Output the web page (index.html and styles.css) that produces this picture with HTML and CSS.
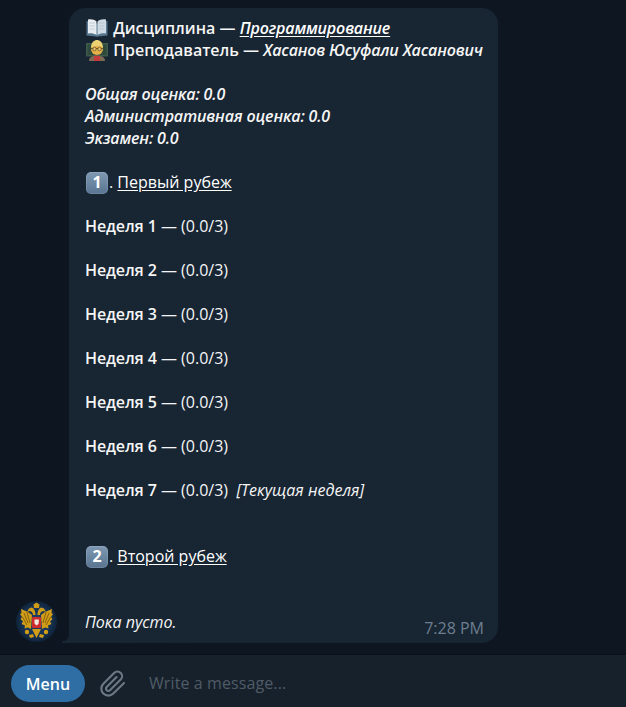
FILE: index.html
```html
<!DOCTYPE html>
<html lang="ru">
<head>
<meta charset="utf-8">
<title>Дисциплина</title>
<link rel="stylesheet" href="styles.css">
</head>
<body>
<main class="chat">
  <div class="row">
    <div class="avatar">
      <svg viewBox="0 0 41 41" width="41" height="41">
        <defs><radialGradient id="sky"><stop offset="0" stop-color="#1c4470"/><stop offset=".75" stop-color="#14304f"/><stop offset="1" stop-color="#0f2238"/></radialGradient></defs>
        <circle cx="20.500" cy="20.500" r="20.500" fill="url(#sky)"/>
        <g fill="#d19c18">
          <path d="M16 14 L12 11 L5 8 L5.500 12 L4 13 L6 16 L4.500 18 L7 20.500 L5.500 23 L9 24.500 L8.500 27.500 L12 26.500 L15 28 Z"/>
          <path d="M25 14 L29 11 L36 8 L35.500 12 L37 13 L35 16 L36.500 18 L34 20.500 L35.500 23 L32 24.500 L32.500 27.500 L29 26.500 L26 28 Z"/>
          <path d="M17 14 C17 11 15 10 13.500 10 L11 11 L13 7.500 L15.500 6.500 C18 7 19.500 10 19.500 14 Z"/>
          <path d="M24 14 C24 11 26 10 27.500 10 L30 11 L28 7.500 L25.500 6.500 C23 7 21.500 10 21.500 14 Z"/>
          <path d="M17.500 3.500 L20.500 1.500 L23.500 3.500 L23 7 L18 7 Z"/>
          <path d="M16 28 L20.500 37 L25 28 Z"/>
          <circle cx="11" cy="31" r="2.200"/>
          <circle cx="30" cy="31" r="2.200"/>
          <path d="M13 34 L17 33 L18 36 L14 37 Z M28 34 L24 33 L23 36 L27 37 Z"/>
        </g>
        <path d="M8 12 L12 22 M6.500 16 L11 24 M11 11 L14 22 M33 12 L29 22 M34.500 16 L30 24 M30 11 L27 22" stroke="#7f5c0e" stroke-width=".9" fill="none"/>
        <rect x="16" y="16" width="9" height="11" rx="1" fill="#cf2a2e"/>
        <path d="M18.500 18.500 L23 18.500 L22.500 23 L20.500 24.500 L18.500 22.500 Z" fill="#efe9df"/>
      </svg>
    </div>
    <article class="bubble">
      <p class="line medium"><svg class="emoji" viewBox="0 0 22 22"><path d="M0.500 4 L10 6 L11 7 L12 6 L21.500 4 L21.500 18.500 L12 19.500 L11 20 L10 19.500 L0.500 18.500 Z" fill="#56778f"/><path d="M2 2.500 C5 1.800 8.500 2.500 10.500 4.500 L10.500 18 C8.500 16.500 5 16 2 16.500 Z" fill="#e8edf1"/><path d="M20 2.500 C17 1.800 13.500 2.500 11.500 4.500 L11.500 18 C13.500 16.500 17 16 20 16.500 Z" fill="#cfdbe4"/><path d="M3.500 6 H9 M3.500 9 H9 M3.500 12 H9 M13 6 H18.500 M13 9 H18.500 M13 12 H18.500" stroke="#a9bac7" stroke-width=".6"/></svg> Дисциплина — <em class="link">Программирование</em></p>
      <p class="line medium"><svg class="emoji" viewBox="0 0 22 22"><rect x="0" y="4" width="22" height="13.500" fill="#3d5a4b"/><rect x="1.500" y="5.500" width="19" height="10.500" fill="#2f4a3d"/><path d="M3 22 C3 18 6.500 16.500 11 16.500 C15.500 16.500 19 18 19 22 Z" fill="#7d6a52"/><rect x="8" y="17" width="6" height="5" fill="#c53a3a"/><circle cx="11" cy="10" r="6" fill="#e3b04a"/><path d="M5 9 C5 3 8.500 1 11 1 C13.500 1 17 3 17 9 C14 6 8 6 5 9 Z" fill="#ecd274"/><path d="M5 9.500 H17" stroke="#5b4420" stroke-width=".8"/><circle cx="8.500" cy="10" r="1.700" fill="#f1cc78" stroke="#5b4420" stroke-width=".7"/><circle cx="13.500" cy="10" r="1.700" fill="#f1cc78" stroke="#5b4420" stroke-width=".7"/></svg> Преподаватель — <em>Хасанов Юсуфали Хасанович</em></p>

      <div class="gap">
        <p class="line"><em>Общая оценка: 0.0</em></p>
        <p class="line"><em>Административная оценка: 0.0</em></p>
        <p class="line"><em>Экзамен: 0.0</em></p>
      </div>

      <p class="line gap"><span class="keycap">1</span>. <a class="link">Первый рубеж</a></p>

      <p class="line gap"><strong>Неделя 1</strong> — (0.0/3)</p>
      <p class="line gap"><strong>Неделя 2</strong> — (0.0/3)</p>
      <p class="line gap"><strong>Неделя 3</strong> — (0.0/3)</p>
      <p class="line gap"><strong>Неделя 4</strong> — (0.0/3)</p>
      <p class="line gap"><strong>Неделя 5</strong> — (0.0/3)</p>
      <p class="line gap"><strong>Неделя 6</strong> — (0.0/3)</p>
      <p class="line gap"><strong>Неделя 7</strong> — (0.0/3)&nbsp; <em class="small">[Текущая неделя]</em></p>

      <p class="line gap-2"><span class="keycap">2</span>. <a class="link">Второй рубеж</a></p>

      <p class="line gap-2"><em class="small">Пока пусто.</em></p>
      <time class="time">7:28 PM</time>
    </article>
  </div>
</main>
<footer class="composer">
  <button class="menu">Menu</button>
  <svg class="clip" viewBox="0 0 24 24" width="28" height="28"><path d="M21.440 11.050l-9.190 9.190a6 6 0 0 1-8.490-8.490l9.190-9.190a4 4 0 0 1 5.660 5.660l-9.200 9.190a2 2 0 0 1-2.830-2.830l8.490-8.480"/></svg>
  <span class="placeholder">Write a message...</span>
</footer>
</body>
</html>
```

FILE: styles.css
```css
* { box-sizing: border-box; }
html, body { height: 100%; margin: 0; }
body {
  display: flex;
  flex-direction: column;
  overflow: hidden;
  background: #0e1621;
  color: #f5f5f5;
  font-family: "Open Sans", sans-serif;
  font-size: 16px;
  line-height: 22px;
}
.chat {
  flex: 1;
  display: flex;
  flex-direction: column;
  justify-content: flex-end;
  padding: 8px 0 11px 16px;
  background: linear-gradient(90deg, #0c1520, #0e1621 30%, #0e1621);
}
.row { display: flex; align-items: flex-end; gap: 12px; }
.avatar { width: 41px; height: 41px; flex: none; margin-bottom: 1px; }
.avatar svg { display: block; }
.bubble {
  position: relative;
  width: 429px;
  padding: 9px 14px 10px 16px;
  background: #182533;
  border-radius: 16px 16px 16px 0;
}
.bubble::before {
  content: "";
  position: absolute;
  left: -7px;
  bottom: 0;
  width: 7px;
  height: 9px;
  background: radial-gradient(circle at 0 0, transparent 7px, #182533 7.500px);
}
.line { margin: 0; height: 22px; white-space: nowrap; }
.medium { font-weight: 600; }
.gap { margin-top: 22px; }
.gap-2 { margin-top: 44px; }
strong { font-weight: 600; letter-spacing: -0.1px; }
em { font-style: italic; font-weight: 600; letter-spacing: -0.15px; }
em.small { font-weight: 400; letter-spacing: 0; }
.link { color: #fff; text-decoration: underline; text-underline-offset: 2px; }
.emoji { width: 22px; height: 22px; margin: 0 1px; vertical-align: -5px; }
.keycap {
  display: inline-block;
  width: 22px;
  height: 22px;
  margin: 0 1px;
  border-radius: 5px;
  background: linear-gradient(#7f99b3, #587490);
  box-shadow: inset 0 0 0 1px rgba(255, 255, 255, 0.12);
  color: #fff;
  font-size: 16px;
  font-weight: 700;
  line-height: 21px;
  text-align: center;
}
.time {
  position: absolute;
  right: 14px;
  bottom: 4px;
  color: #6d7f8f;
  font-size: 16px;
}
.composer {
  flex: none;
  height: 53px;
  display: flex;
  align-items: flex-start;
  padding: 10px 0 0 11px;
  background: #17212b;
  border-top: 1px solid #0a1119;
}
.menu {
  width: 74px;
  height: 37px;
  padding: 0;
  border: 0;
  border-radius: 19px;
  background: #2f6ea5;
  color: #fff;
  font: 600 16px "Open Sans", sans-serif;
}
.clip {
  margin: 5px 0 0 14px;
  fill: none;
  stroke: #6c7883;
  stroke-width: 1.800;
  stroke-linecap: round;
  stroke-linejoin: round;
}
.placeholder {
  margin: 7px 0 0 22px;
  color: #4f5b67;
  font-size: 16px;
  letter-spacing: 0.1px;
}
```
